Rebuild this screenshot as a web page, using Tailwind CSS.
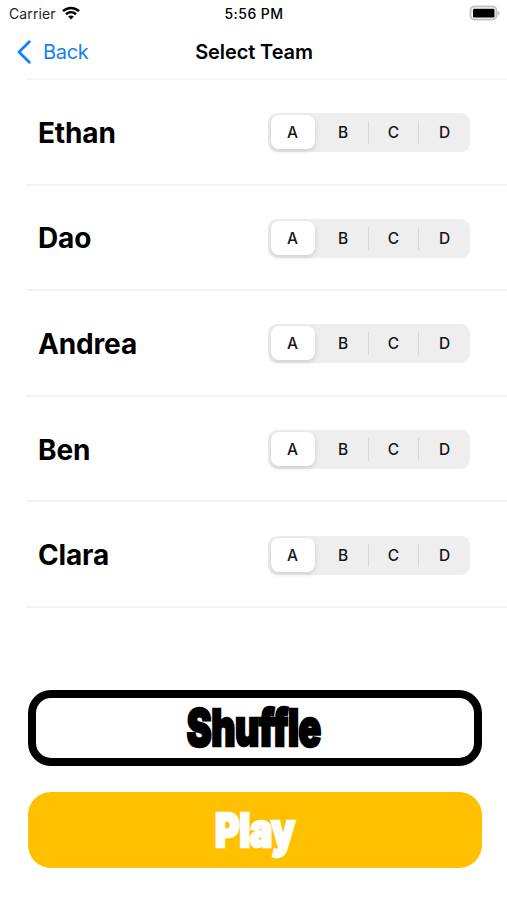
<!DOCTYPE html>
<html lang="en">
<head>
<meta charset="utf-8">
<title>Select Team</title>
<script src="https://cdn.jsdelivr.net/npm/@tailwindcss/browser@4"></script>
</head>
<body class="bg-white">
<main class="flex h-[900px] w-[507px] flex-col overflow-hidden bg-white font-[Inter,'Liberation_Sans',sans-serif] text-black">
  <header class="h-[78px] shrink-0">
    <div class="grid h-[28px] grid-cols-3 items-center pl-[9px] pr-[7px] text-[14px] leading-[28px]">
      <div class="flex items-center gap-[6px] text-[#222]">
        <span class="w-[47px] whitespace-nowrap tracking-[0.1px]">Carrier</span>
        <svg class="-mt-[3px] h-[14px] w-[18px]" viewBox="0 0 18 14" fill="none" stroke="#000" stroke-width="2.5">
          <path d="M1 5.2C5.6.8 12.4.8 17 5.2M4 8.3c3-2.7 7-2.7 10 0"/>
          <path d="M6.1 10.5c1.7-1.5 4.1-1.5 5.8 0L9 13.4z" fill="#000" stroke="none"/>
        </svg>
      </div>
      <span class="-ml-[1px] text-center font-medium tracking-[0.45px]">5:56 PM</span>
      <svg class="-mt-[2px] h-[16px] w-[31px] justify-self-end" viewBox="0 0 31 16">
        <rect x="1.5" y="1.5" width="26" height="13" rx="4" fill="#fff" stroke="#c4c4c4" stroke-width="2"/>
        <rect x="4" y="3.7" width="21.5" height="8.8" rx="1.2" fill="#000"/>
        <path d="M28.8 6c2.3.8 2.3 3.6 0 4.4z" fill="#bcbcbc"/>
      </svg>
    </div>
    <div class="grid h-[48px] grid-cols-3 items-center pl-[17px] pr-[17px] text-[20px]">
      <div class="flex items-center gap-[12px] text-[#147efb]">
        <svg class="h-[24px] w-[14px]" viewBox="0 0 14 24" fill="none" stroke="currentColor" stroke-width="2.8" stroke-linecap="round" stroke-linejoin="round"><path d="M12.3 1.8 2 12l10.3 10.2"/></svg>
        <span class="tracking-[-0.3px]">Back</span>
      </div>
      <h1 class="whitespace-nowrap pl-px text-center font-semibold tracking-[-0.1px]">Select Team</h1>
    </div>
  </header>
  <ul id="teams" class="ml-[26px] shrink-0 border-t-2 border-[#f6f6f6]"></ul>
  <div class="ml-[27.5px] mt-[82px] flex w-[454px] flex-col gap-[26px]">
    <button class="flex h-[76px] items-center justify-center rounded-[23px] border-8 border-black pr-[2px]">
      <span class="inline-block scale-x-[.73] whitespace-nowrap text-[51px] font-black leading-none tracking-[-0.5px] [-webkit-text-stroke:2.6px_currentColor]">Shuffle</span>
    </button>
    <button class="flex h-[76px] items-center justify-center rounded-[23px] bg-[#ffc000] text-white">
      <span class="inline-block scale-x-[.8] whitespace-nowrap text-[47px] font-black leading-none tracking-[-0.5px] [-webkit-text-stroke:2.6px_currentColor]">Play</span>
    </button>
  </div>
</main>
<template id="row">
  <li class="flex h-[105.6px] items-center justify-between border-b-2 border-[#f3f3f3] pl-[12px] pr-[37px] pt-[2px]">
    <span class="name text-[28px] font-bold tracking-[-0.15px]"></span>
    <div class="grid h-[39px] w-[202px] grid-cols-[48px_52px_50px_52px] items-center rounded-[9px] bg-[#eeeeee] text-center text-[15.5px] font-medium leading-[23px] text-[#151515]">
      <span class="-mt-px ml-[2.5px] h-[34px] w-[44px] rounded-[8px] bg-white leading-[35px] shadow-[0_2px_5px_rgba(0,0,0,0.14)]">A</span>
      <span class="pl-[2px]">B</span>
      <span class="border-l border-[#d7d7d7]">C</span>
      <span class="border-l border-[#d7d7d7]">D</span>
    </div>
  </li>
</template>
<script>
  const list = document.getElementById('teams');
  const row = document.getElementById('row');
  for (const name of ['Ethan', 'Dao', 'Andrea', 'Ben', 'Clara']) {
    const item = row.content.cloneNode(true);
    item.querySelector('.name').textContent = name;
    list.append(item);
  }
</script>
</body>
</html>
